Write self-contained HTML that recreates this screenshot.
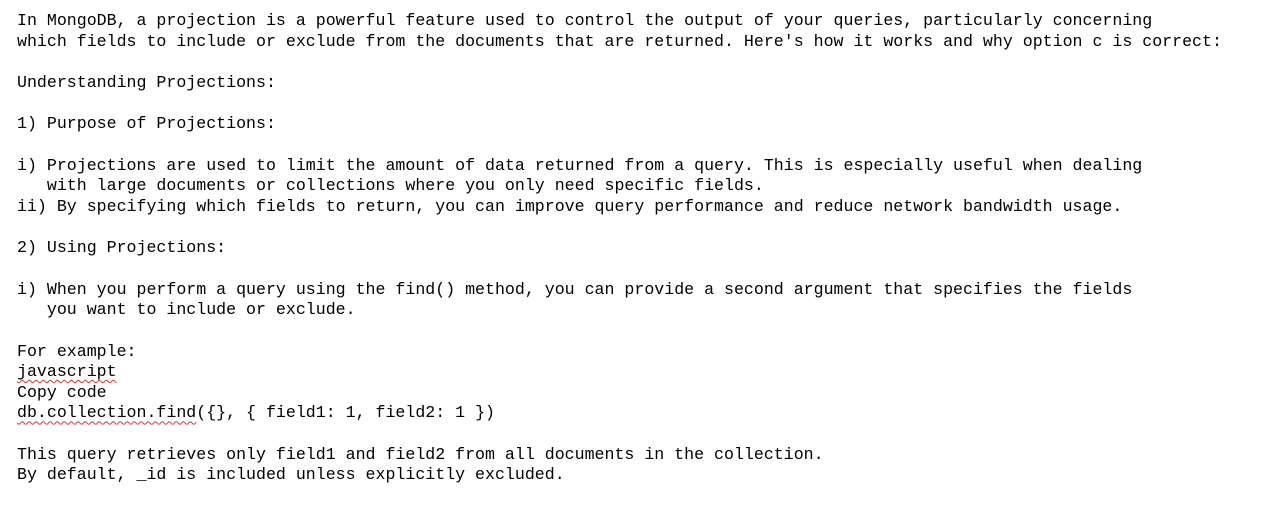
<!DOCTYPE html>
<html><head><meta charset="utf-8"><style>
html,body{margin:0;padding:0;background:#fff;width:1280px;height:517px;overflow:hidden}
pre{margin:0;padding:11px 0 0 17px;font-family:"Liberation Mono",monospace;font-size:16.6px;line-height:20.65px;color:#000;white-space:pre}
.u{text-decoration:underline wavy #d33;text-decoration-thickness:1px;text-underline-offset:3px}
</style></head><body><pre>In MongoDB, a projection is a powerful feature used to control the output of your queries, particularly concerning
which fields to include or exclude from the documents that are returned. Here's how it works and why option c is correct:

Understanding Projections:

1) Purpose of Projections:

i) Projections are used to limit the amount of data returned from a query. This is especially useful when dealing
   with large documents or collections where you only need specific fields.
ii) By specifying which fields to return, you can improve query performance and reduce network bandwidth usage.

2) Using Projections:

i) When you perform a query using the find() method, you can provide a second argument that specifies the fields
   you want to include or exclude.

For example:
<span class="u">javascript</span>
Copy code
<span class="u">db.collection.find</span>({}, { field1: 1, field2: 1 })

This query retrieves only field1 and field2 from all documents in the collection.
By default, _id is included unless explicitly excluded.
</pre></body></html>
